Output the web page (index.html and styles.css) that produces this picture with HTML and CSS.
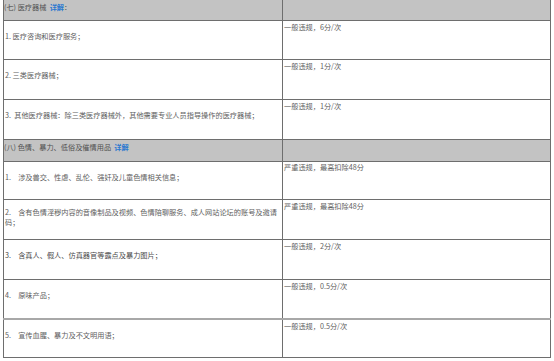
FILE: index.html
```html
<!DOCTYPE html>
<html lang="zh">
<head>
<meta charset="utf-8">
<link rel="stylesheet" href="styles.css">
</head>
<body>
<table class="rules">
  <colgroup><col class="c-left"><col class="c-right"></colgroup>
  <tr class="head">
    <td>(七) 医疗器械&nbsp; <a class="more" href="#">详解</a>：</td>
    <td></td>
  </tr>
  <tr class="row h39">
    <td class="item">1. 医疗咨询和医疗服务；</td>
    <td class="pen">一般违规，6分/次</td>
  </tr>
  <tr class="row h40">
    <td class="item">2. 三类医疗器械；</td>
    <td class="pen">一般违规，1分/次</td>
  </tr>
  <tr class="row h40">
    <td class="item">3.&nbsp; 其他医疗器械：除三类医疗器械外，其他需要专业人员指导操作的医疗器械；</td>
    <td class="pen">一般违规，1分/次</td>
  </tr>
  <tr class="head h22">
    <td>(八) 色情、暴力、低俗及催情用品&nbsp; <a class="more" href="#">详解</a></td>
    <td></td>
  </tr>
  <tr class="row h38">
    <td class="item">1.　涉及兽交、性虐、乱伦、强奸及儿童色情相关信息；</td>
    <td class="pen top">严重违规，最高扣除48分</td>
  </tr>
  <tr class="row h40 light">
    <td class="item wrap">2.　含有色情淫秽内容的音像制品及视频、色情陪聊服务、成人网站论坛的账号及邀请码；</td>
    <td class="pen">严重违规，最高扣除48分</td>
  </tr>
  <tr class="row h40">
    <td class="item dark">3.　含真人、假人、仿真器官等露点及暴力图片；</td>
    <td class="pen">一般违规，2分/次</td>
  </tr>
  <tr class="row h39 light-bottom">
    <td class="item">4.　原味产品；</td>
    <td class="pen">一般违规，0.5分/次</td>
  </tr>
  <tr class="row h39">
    <td class="item">5.　宣传血腥、暴力及不文明用语；</td>
    <td class="pen">一般违规，0.5分/次</td>
  </tr>
</table>
</body>
</html>
```

FILE: styles.css
```css
html, body {
  margin: 0;
  padding: 0;
  background: #ffffff;
}

body {
  font-family: "Noto Sans CJK SC", "Noto Sans", sans-serif;
  font-size: 7.2px;
  line-height: 10px;
  color: #606060;
}

.rules {
  margin: -1px 0 0 3px;
  border-collapse: collapse;
  table-layout: fixed;
  width: 547px;
}

.c-left { width: 279px; }
.c-right { width: 268px; }

.rules td {
  border: 1px solid #6e6e6e;
  padding: 0;
  vertical-align: top;
  overflow: hidden;
  white-space: nowrap;
}

.head td {
  background: #c3c3c3;
  color: #505050;
  height: 21px;
  padding-top: 2px;
  box-sizing: border-box;
}

.head.h22 td { height: 22px; padding-top: 2px; }

.more {
  color: #2a78d0;
  text-decoration: none;
  font-weight: bold;
}

.row.h38 td { height: 38px; }
.row.h39 td { height: 39px; }
.row.h40 td { height: 40px; }

.rules td.item {
  padding: 10px 0 0 1px;
  box-sizing: border-box;
}

.rules td.item.wrap {
  padding-top: 7px;
  white-space: normal;
  word-break: break-all;
}

.rules td.item.dark { color: #4a4a4a; }

.rules td.pen {
  padding: 1px 0 0 1px;
  box-sizing: border-box;
}

.rules td.pen.top { padding-top: 0; }

.row.light td { border-top-color: #9a9a9a; }
.row.light-bottom td { border-bottom: 2px solid #a8a8a8; }
```
